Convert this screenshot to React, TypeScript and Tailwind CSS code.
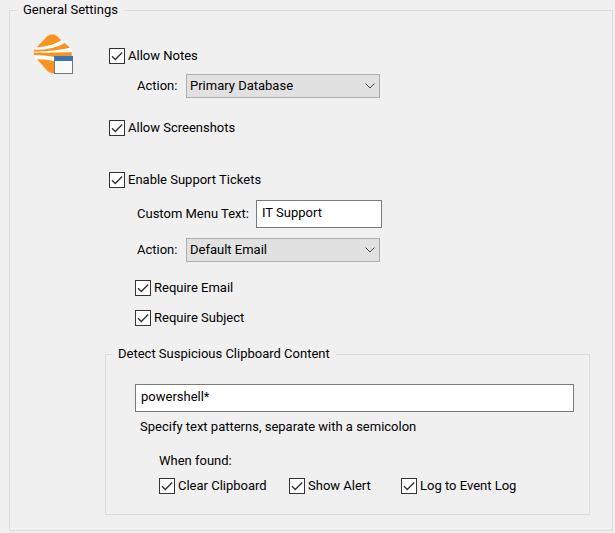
import React from 'react';

const databaseOptions = ['Primary Database', 'Secondary Database'];
const ticketOptions = ['Default Email', 'Custom Email'];

function Checkbox({ label }: { label: string }) {
  return (
    <label className="flex items-center gap-[3px]">
      <span className="grid">
        <input
          type="checkbox"
          defaultChecked
          className="peer col-start-1 row-start-1 h-4 w-4 appearance-none border border-[#333333] bg-white"
        />
        <svg
          viewBox="0 0 16 16"
          className="pointer-events-none invisible col-start-1 row-start-1 h-4 w-4 peer-checked:visible"
          fill="none"
          stroke="#333333"
          strokeWidth="1.4"
        >
          <path d="M3 8.3 6.3 11.6 13.2 4.6" />
        </svg>
      </span>
      {label}
    </label>
  );
}

function Select({ id, options }: { id: string; options: string[] }) {
  return (
    <div className="grid w-[194px] items-center">
      <select
        id={id}
        className="col-start-1 row-start-1 h-6 w-full appearance-none border border-[#adadad] bg-[#e1e1e1] pl-[3px] pr-6"
      >
        {options.map((option) => (
          <option key={option}>{option}</option>
        ))}
      </select>
      <svg
        viewBox="0 0 10 6"
        className="pointer-events-none col-start-1 row-start-1 mr-[5px] h-[6px] w-[10px] justify-self-end"
        fill="none"
        stroke="#444444"
      >
        <path d="M0.6 0.6 5 5 9.4 0.6" />
      </svg>
    </div>
  );
}

function Logo() {
  return (
    <svg viewBox="0 0 40 40" className="h-10 w-10 shrink-0" aria-hidden="true">
      <path
        fill="#ffffff"
        d="M4 13 14 2.6Q19-2.2 24.500 2.600L37 14Q41 19 37 24L22 39.500Q17 39.800 14 36.600L3 25Q-2 19 4 13Z"
      />
      <g fill="#f7931e">
        <path d="M3.500 13.400 14 2.600Q19-2.200 24.500 2.600L28.300 6.200Q19 12.400 3.500 13.400Z" />
        <path d="M1.300 15.800Q20 16 31.800 9L37 13.800Q23 17.300.6 17.800Z" />
        <path d="M.5 18.600Q20 18.800 38.800 18.200L38.600 23H22Q12 21.200 1 21Z" />
        <path d="M4 25.200Q14 25 22 27.500V39.500Q17 39.800 14 36.600Z" />
      </g>
      <rect x="21.500" y="22.500" width="18" height="17" fill="#fafafa" stroke="#777777" />
      <path fill="#3b75b4" d="M21 22h19v5H21z" />
    </svg>
  );
}

export default function App() {
  return (
    <main className="min-h-screen bg-[#f0f0f0] pr-[2px] pl-[9px] font-['Roboto',Tahoma,sans-serif] text-[13px] leading-4 text-black">
      <fieldset className="min-w-0 border border-[#dcdcdc] pr-[22px] pb-[15px] pl-[23px]">
        <legend className="-ml-4 px-[6px] leading-5">General Settings</legend>

        <div className="flex pt-[14px]">
          <Logo />

          <div className="min-w-0 flex-1 pt-[14px] pl-8">
            <div className="pl-1">
              <Checkbox label="Allow Notes" />
              <div className="mt-[10px] flex items-center pl-7">
                <label htmlFor="notes-action" className="w-[49px]">Action:</label>
                <Select id="notes-action" options={databaseOptions} />
              </div>

              <div className="mt-[22px]">
                <Checkbox label="Allow Screenshots" />
              </div>

              <div className="mt-9">
                <Checkbox label="Enable Support Tickets" />
              </div>
              <div className="mt-3 flex items-center pl-7">
                <label htmlFor="menu-text" className="w-[119px]">Custom Menu Text:</label>
                <input
                  id="menu-text"
                  defaultValue="IT Support"
                  className="h-7 w-[126px] border border-[#7a7a7a] bg-white px-[5px] pb-1"
                />
              </div>
              <div className="mt-[10px] flex items-center pl-7">
                <label htmlFor="ticket-action" className="w-[49px]">Action:</label>
                <Select id="ticket-action" options={ticketOptions} />
              </div>
              <div className="mt-[18px] space-y-[14px] pl-[26px]">
                <Checkbox label="Require Email" />
                <Checkbox label="Require Subject" />
              </div>
            </div>

            <fieldset className="mt-[18px] min-w-0 border border-[#dcdcdc] pr-[15px] pb-5 pl-[29px]">
              <legend className="-ml-[23px] px-[6px] leading-5">Detect Suspicious Clipboard Content</legend>
              <input
                aria-label="Text patterns"
                defaultValue="powershell*"
                className="mt-5 h-7 w-full border border-[#7a7a7a] bg-white px-[5px] pb-1"
              />
              <p className="mt-[7px] pl-[5px]">Specify text patterns, separate with a semicolon</p>
              <p className="mt-[18px] pl-6">When found:</p>
              <div className="mt-[9px] grid grid-cols-[130px_112px_auto] pl-6">
                <Checkbox label="Clear Clipboard" />
                <Checkbox label="Show Alert" />
                <Checkbox label="Log to Event Log" />
              </div>
            </fieldset>
          </div>
        </div>
      </fieldset>
    </main>
  );
}
